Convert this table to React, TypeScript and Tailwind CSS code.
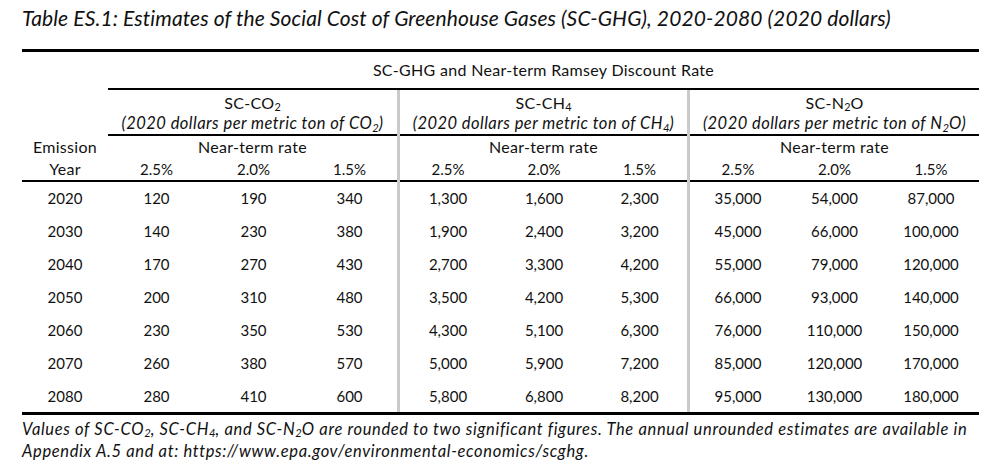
const rows = [
  ["2020", "120", "190", "340", "1,300", "1,600", "2,300", "35,000", "54,000", "87,000"],
  ["2030", "140", "230", "380", "1,900", "2,400", "3,200", "45,000", "66,000", "100,000"],
  ["2040", "170", "270", "430", "2,700", "3,300", "4,200", "55,000", "79,000", "120,000"],
  ["2050", "200", "310", "480", "3,500", "4,200", "5,300", "66,000", "93,000", "140,000"],
  ["2060", "230", "350", "530", "4,300", "5,100", "6,300", "76,000", "110,000", "150,000"],
  ["2070", "260", "380", "570", "5,000", "5,900", "7,200", "85,000", "120,000", "170,000"],
  ["2080", "280", "410", "600", "5,800", "6,800", "8,200", "95,000", "130,000", "180,000"],
];

// grid columns: year | 3 x CO2 | sep | 3 x CH4 | sep | 3 x N2O
const dataCols = [1, 2, 3, 4, 6, 7, 8, 10, 11, 12];
const colStart: Record<number, string> = {
  1: "col-start-1",
  2: "col-start-2",
  3: "col-start-3",
  4: "col-start-4",
  6: "col-start-6",
  7: "col-start-7",
  8: "col-start-8",
  10: "col-start-10",
  11: "col-start-11",
  12: "col-start-12",
};
const rowStart = [
  "row-start-6",
  "row-start-7",
  "row-start-8",
  "row-start-9",
  "row-start-10",
  "row-start-11",
  "row-start-12",
];

function Sub({ children }: { children: React.ReactNode }) {
  return <span className="relative top-[0.22em] text-[0.68em] tracking-normal">{children}</span>;
}

const groups = [
  { start: "col-start-2", name: <>SC-CO<Sub>2</Sub></>, unit: <>CO<Sub>2</Sub></> },
  { start: "col-start-6", name: <>SC-CH<Sub>4</Sub></>, unit: <>CH<Sub>4</Sub></> },
  { start: "col-start-10", name: <>SC-N<Sub>2</Sub>O</>, unit: <>N<Sub>2</Sub>O</> },
];

const label = "text-[16px] tracking-[0.3px]";

export default function App() {
  return (
    <div className="w-[999px] h-[473px] bg-white text-[#111] pl-[22px] font-['Lato','Carlito','Liberation_Sans',sans-serif]">
      <div className="h-[36px] flex items-center italic text-[21px] tracking-[0.1px]">
        Table ES.1: Estimates of the Social Cost of Greenhouse Gases (SC-GHG), 2020-2080 (2020 dollars)
      </div>

      <div className="mt-[13px] w-[957px] h-[3px] bg-black" />

      <div className="w-[957px] grid grid-cols-[86px_97px_97px_95px_3px_96px_96px_95px_3px_96px_97px_96px] grid-rows-[38px_23px_23px_22px_24px_33px_33px_33px_33px_33px_33px_32px] text-[15px]">
        {/* row A */}
        <div className={`col-start-2 col-end-13 row-start-1 border-b-2 border-black flex items-center justify-center ${label}`}>
          <span>SC-GHG and Near-term Ramsey Discount Rate</span>
        </div>

        {/* separators */}
        <div className="col-start-5 row-start-2 row-end-13 bg-[#cacaca]" />
        <div className="col-start-9 row-start-2 row-end-13 bg-[#cacaca]" />

        {groups.map((g, i) => (
          <div key={i} className="contents">
            <div className={`${g.start} col-span-3 row-start-2 flex items-center justify-center pt-[3px] ${label}`}>
              <span>{g.name}</span>
            </div>
            <div className={`${g.start} col-span-3 row-start-3 border-b-2 border-black flex items-center justify-center italic text-[16.5px] tracking-[0.45px]`}>
              <span>(2020 dollars per metric ton of {g.unit})</span>
            </div>
            <div className={`${g.start} col-span-3 row-start-4 flex items-center justify-center ${label}`}>
              <span>Near-term rate</span>
            </div>
          </div>
        ))}

        <div className={`col-start-1 row-start-4 flex items-center justify-center ${label}`}>Emission</div>
        <div className={`col-start-1 row-start-5 border-b-2 border-black flex items-center justify-center ${label}`}>Year</div>
        {[2, 3, 4, 6, 7, 8, 10, 11, 12].map((c, i) => (
          <div key={c} className={`${colStart[c]} row-start-5 border-b-2 border-black flex items-center justify-center`}>
            {["2.5%", "2.0%", "1.5%"][i % 3]}
          </div>
        ))}

        {rows.map((r, ri) =>
          r.map((v, ci) => (
            <div
              key={`${ri}-${ci}`}
              className={`${colStart[dataCols[ci]]} ${rowStart[ri]} flex items-center justify-center`}
            >
              {v}
            </div>
          ))
        )}
      </div>

      <div className="w-[957px] h-[3px] bg-black" />

      <div className="mt-[4px] italic text-[16.5px] tracking-[0.65px] leading-[21px] w-[977px] whitespace-nowrap">
        Values of SC-CO<Sub>2</Sub>, SC-CH<Sub>4</Sub>, and SC-N<Sub>2</Sub>O are rounded to two significant figures. The annual unrounded estimates are available in
        <br />
        Appendix A.5 and at: https://www.epa.gov/environmental-economics/scghg.
      </div>
    </div>
  );
}
